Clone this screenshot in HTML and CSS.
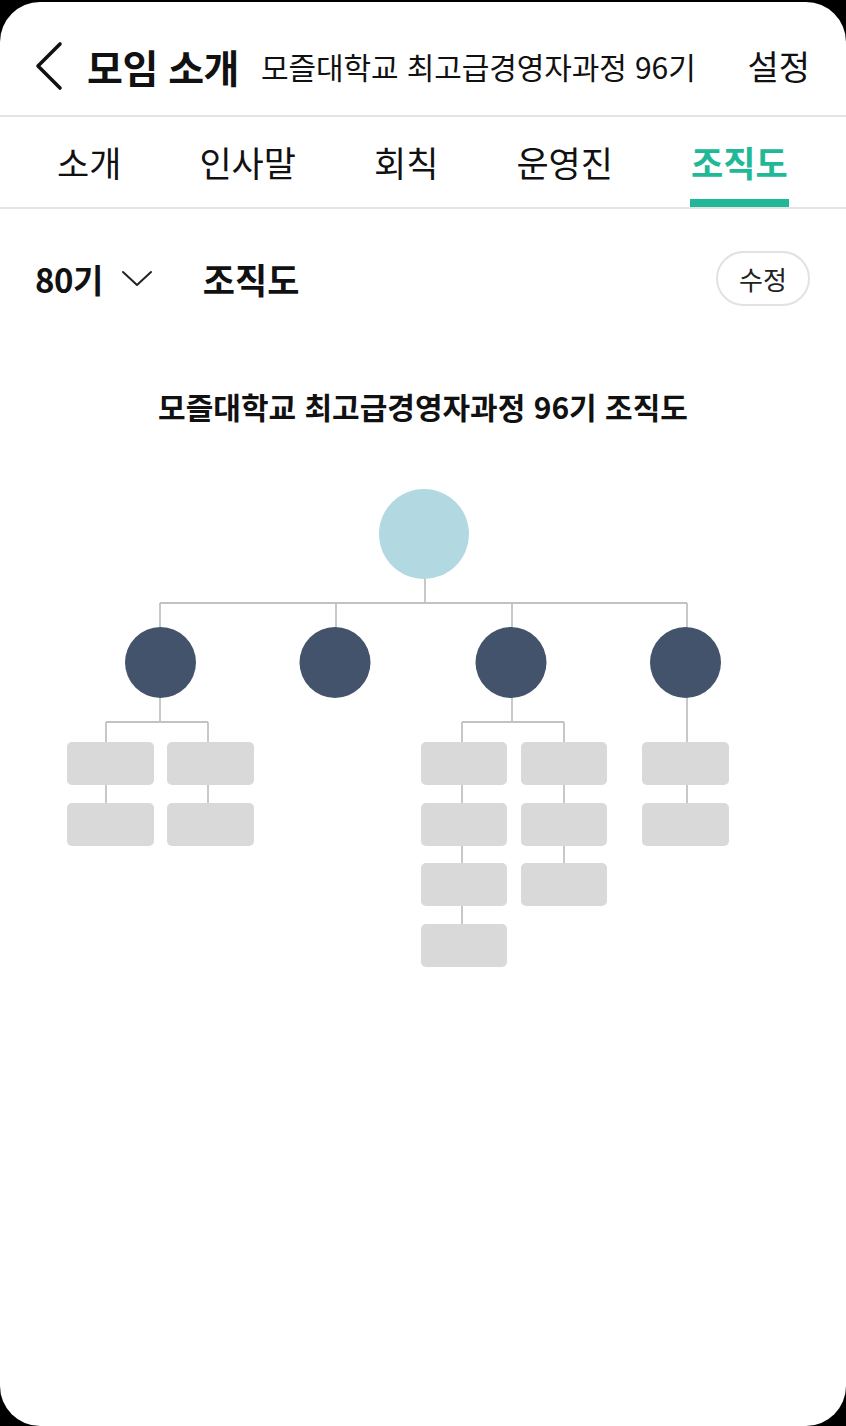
FILE: index.html
```html
<!DOCTYPE html>
<html lang="ko">
<head>
<meta charset="utf-8">
<title>모임 소개 - 조직도</title>
<link rel="stylesheet" href="styles.css">
</head>
<body>
<div class="phone">
  <header class="header">
    <svg class="back" width="32" height="50" viewBox="0 0 32 50" aria-hidden="true">
      <path d="M27 3 L5 25 L27 47" fill="none" stroke="#111" stroke-width="3.6" stroke-linecap="round" stroke-linejoin="round"/>
    </svg>
    <h1 class="title">모임 소개</h1>
    <span class="subtitle">모즐대학교 최고급경영자과정 96기</span>
    <span class="settings">설정</span>
  </header>

  <nav class="tabs">
    <span class="tab">소개</span>
    <span class="tab">인사말</span>
    <span class="tab">회칙</span>
    <span class="tab">운영진</span>
    <span class="tab active">조직도</span>
  </nav>

  <div class="section">
    <span class="term">80기</span>
    <svg class="chev" width="32" height="18" viewBox="0 0 32 18" aria-hidden="true">
      <path d="M2 2 L16 15 L30 2" fill="none" stroke="#222" stroke-width="2" stroke-linecap="round" stroke-linejoin="round"/>
    </svg>
    <span class="section-title">조직도</span>
    <button class="edit">수정</button>
  </div>

  <h2 class="chart-title">모즐대학교 최고급경영자과정 96기 조직도</h2>

  <svg class="chart" width="846" height="520" viewBox="0 470 846 520" aria-hidden="true">
    <g stroke="#c2c2c2" stroke-width="1.8" fill="none">
      <line x1="425" y1="578" x2="425" y2="603"/>
      <line x1="160" y1="603" x2="687" y2="603"/>
      <line x1="160" y1="603" x2="160" y2="630"/>
      <line x1="336" y1="603" x2="336" y2="630"/>
      <line x1="512" y1="603" x2="512" y2="630"/>
      <line x1="687" y1="603" x2="687" y2="630"/>

      <line x1="160" y1="695" x2="160" y2="722"/>
      <line x1="106" y1="722" x2="208" y2="722"/>
      <line x1="106" y1="722" x2="106" y2="803"/>
      <line x1="208" y1="722" x2="208" y2="803"/>

      <line x1="512" y1="695" x2="512" y2="722"/>
      <line x1="462" y1="722" x2="564" y2="722"/>
      <line x1="462" y1="722" x2="462" y2="925"/>
      <line x1="564" y1="722" x2="564" y2="864"/>

      <line x1="687" y1="695" x2="687" y2="803"/>
    </g>

    <circle cx="424" cy="534" r="45" fill="#b2d8e2"/>
    <g fill="#43536b">
      <circle cx="160.5" cy="662.5" r="35.5"/>
      <circle cx="335" cy="662.5" r="35.5"/>
      <circle cx="511" cy="662.5" r="35.5"/>
      <circle cx="685.5" cy="662.5" r="35.5"/>
    </g>

    <g fill="#d9d9d9">
      <rect x="67" y="742" width="87" height="43" rx="5"/>
      <rect x="167" y="742" width="87" height="43" rx="5"/>
      <rect x="67" y="803" width="87" height="43" rx="5"/>
      <rect x="167" y="803" width="87" height="43" rx="5"/>

      <rect x="421" y="742" width="86" height="43" rx="5"/>
      <rect x="421" y="803" width="86" height="43" rx="5"/>
      <rect x="421" y="863" width="86" height="43" rx="5"/>
      <rect x="421" y="924" width="86" height="43" rx="5"/>

      <rect x="521" y="742" width="86" height="43" rx="5"/>
      <rect x="521" y="803" width="86" height="43" rx="5"/>
      <rect x="521" y="863" width="86" height="43" rx="5"/>

      <rect x="642" y="742" width="87" height="43" rx="5"/>
      <rect x="642" y="803" width="87" height="43" rx="5"/>
    </g>
  </svg>
</div>
</body>
</html>
```

FILE: styles.css
```css
html, body {
  margin: 0;
  padding: 0;
  background: #000;
}

body {
  font-family: "Noto Sans CJK KR", "Noto Sans", sans-serif;
  color: #111;
}

.phone {
  margin-top: 2px;
  height: 1424px;
  background: #fff;
  border-radius: 40px;
  overflow: hidden;
}

/* Header */
.header {
  box-sizing: border-box;
  height: 115px;
  display: flex;
  align-items: center;
  padding: 14px 36px 0 33px;
  border-bottom: 2px solid #e4e4e4;
}

.back {
  display: block;
  flex: none;
}

.title {
  margin: 0 0 0 22px;
  font-size: 39px;
  font-weight: 700;
  line-height: 48px;
  letter-spacing: -0.5px;
  white-space: nowrap;
}

.subtitle {
  margin-left: 22px;
  font-size: 30px;
  line-height: 40px;
  letter-spacing: -0.1px;
  color: #111;
  white-space: nowrap;
}

.settings {
  margin-left: auto;
  font-size: 34px;
  line-height: 44px;
  color: #111;
  white-space: nowrap;
}

/* Tabs */
.tabs {
  box-sizing: border-box;
  height: 92px;
  display: flex;
  gap: 78px;
  padding-left: 57px;
  border-bottom: 2px solid #e4e4e4;
}

.tab {
  position: relative;
  display: flex;
  align-items: center;
  font-size: 35px;
  line-height: 44px;
  color: #111;
}

.tab.active {
  color: #21b898;
  font-weight: 700;
}

.tab.active::after {
  content: "";
  position: absolute;
  left: -1px;
  right: -1px;
  bottom: 0;
  height: 8px;
  background: #21b898;
}

/* Section row */
.section {
  display: flex;
  align-items: center;
  height: 55px;
  padding: 42px 36px 0 35px;
}

.term {
  font-size: 33px;
  font-weight: 700;
  line-height: 44px;
  letter-spacing: -0.5px;
}

.chev {
  display: block;
  margin-left: 18px;
}

.section-title {
  margin-left: 50px;
  font-size: 35px;
  font-weight: 700;
  line-height: 44px;
}

.edit {
  margin-left: auto;
  box-sizing: border-box;
  width: 94px;
  height: 55px;
  border: 2px solid #e2e2e2;
  border-radius: 28px;
  background: #fff;
  font-family: inherit;
  font-size: 26px;
  color: #222;
  padding: 0;
}

/* Chart */
.chart-title {
  margin: 80px 0 0;
  text-align: center;
  font-size: 30px;
  font-weight: 700;
  line-height: 40px;
}

.chart {
  display: block;
  margin-top: 44px;
}
```
